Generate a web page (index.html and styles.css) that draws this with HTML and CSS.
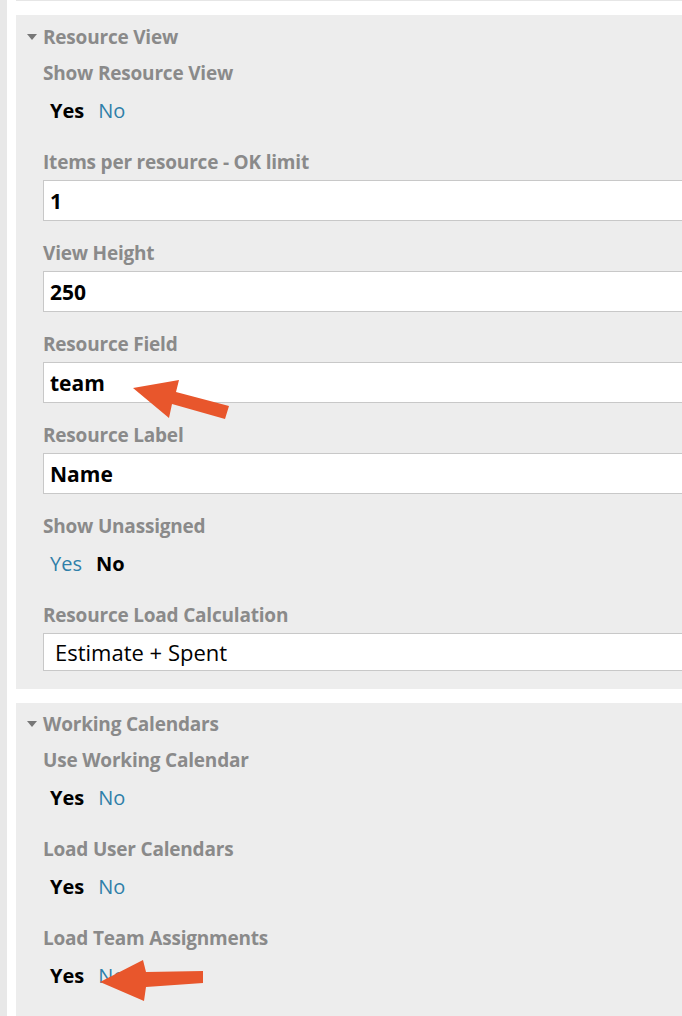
FILE: index.html
```html
<!DOCTYPE html>
<html>
<head>
<meta charset="utf-8">
<link rel="stylesheet" href="styles.css">
</head>
<body>
<div class="page">
  <div class="strip"></div>
  <div class="main">
    <div class="prev"></div>
    <section class="panel first">
      <h2 class="head"><span class="tri"></span>Resource View</h2>
      <div class="field toggle">
        <div class="label">Show Resource View</div>
        <div class="opts"><span class="on">Yes</span><span class="off">No</span></div>
      </div>
      <div class="field">
        <div class="label">Items per resource - OK limit</div>
        <div class="input">1</div>
      </div>
      <div class="field">
        <div class="label">View Height</div>
        <div class="input">250</div>
      </div>
      <div class="field">
        <div class="label">Resource Field</div>
        <div class="input">team</div>
      </div>
      <div class="field">
        <div class="label">Resource Label</div>
        <div class="input">Name</div>
      </div>
      <div class="field toggle">
        <div class="label">Show Unassigned</div>
        <div class="opts"><span class="off">Yes</span><span class="on">No</span></div>
      </div>
      <div class="field last">
        <div class="label">Resource Load Calculation</div>
        <div class="select">Estimate + Spent</div>
      </div>
    </section>
    <section class="panel second">
      <h2 class="head"><span class="tri"></span>Working Calendars</h2>
      <div class="field toggle">
        <div class="label">Use Working Calendar</div>
        <div class="opts"><span class="on">Yes</span><span class="off">No</span></div>
      </div>
      <div class="field toggle">
        <div class="label">Load User Calendars</div>
        <div class="opts"><span class="on">Yes</span><span class="off">No</span></div>
      </div>
      <div class="field toggle">
        <div class="label">Load Team Assignments</div>
        <div class="opts"><span class="on">Yes</span><span class="off">No</span></div>
      </div>
    </section>
  </div>
</div>
<svg class="arrows" width="682" height="1016" viewBox="0 0 682 1016">
  <polygon fill="#e8562c" points="133,388 179,380 176,392 229,406 225,419 172,404 169,418"/>
  <polygon fill="#e8562c" points="100,982 143,960 146,972 203,971 203,983 146,987 144,1001"/>
</svg>
</body>
</html>
```
FILE: styles.css
```css
html, body {
  margin: 0;
  padding: 0;
  background: #ffffff;
}
body {
  font-family: "Open Sans", Lato, sans-serif;
  width: 682px;
  height: 1016px;
  overflow: hidden;
  position: relative;
}
.page {
  display: flex;
  height: 1016px;
}
.strip {
  width: 7px;
  flex: none;
  background: #e8e8e8;
}
.main {
  flex: 1;
  margin-left: 9px;
  display: flex;
  flex-direction: column;
}
.prev {
  height: 1px;
  background: #e6e6e6;
  margin-bottom: 14px;
}
.panel {
  background: #ededed;
  padding: 10px 0 0 27px;
}
.panel.first {
  padding-bottom: 18px;
  margin-bottom: 14px;
}
.panel.second {
  flex: 1;
  padding-top: 9px;
}
.head {
  margin: 0 0 12px 0;
  font-size: 19px;
  line-height: 24px;
  font-weight: 700;
  color: #8a8a8a;
  position: relative;
  letter-spacing: -0.2px;
}
.tri {
  position: absolute;
  left: -16px;
  top: 9px;
  width: 0;
  height: 0;
  border-left: 5px solid transparent;
  border-right: 5px solid transparent;
  border-top: 6px solid #777777;
}
.field {
  margin-bottom: 20px;
}
.field.toggle {
  margin-bottom: 27px;
}
.field.last {
  margin-bottom: 0;
}
.label {
  font-size: 19px;
  line-height: 24px;
  font-weight: 700;
  color: #8a8a8a;
  margin-bottom: 6px;
  letter-spacing: -0.2px;
}
.toggle .label {
  margin-bottom: 14px;
}
.opts {
  display: flex;
  gap: 14px;
  padding-left: 7px;
  font-size: 20px;
  line-height: 24px;
}
.opts .on {
  font-weight: 700;
  color: #000000;
}
.opts .off {
  color: #2f7fa9;
}
.input, .select {
  background: #ffffff;
  border: 1px solid #c8c8c8;
  border-right: none;
  box-sizing: border-box;
  height: 41px;
  padding-left: 6px;
  display: flex;
  align-items: center;
  font-size: 21px;
  font-weight: 700;
  color: #000000;
}
.select {
  height: 38px;
  padding-left: 11px;
  font-size: 22px;
  font-weight: 400;
}
.arrows {
  position: absolute;
  left: 0;
  top: 0;
  pointer-events: none;
}
```
